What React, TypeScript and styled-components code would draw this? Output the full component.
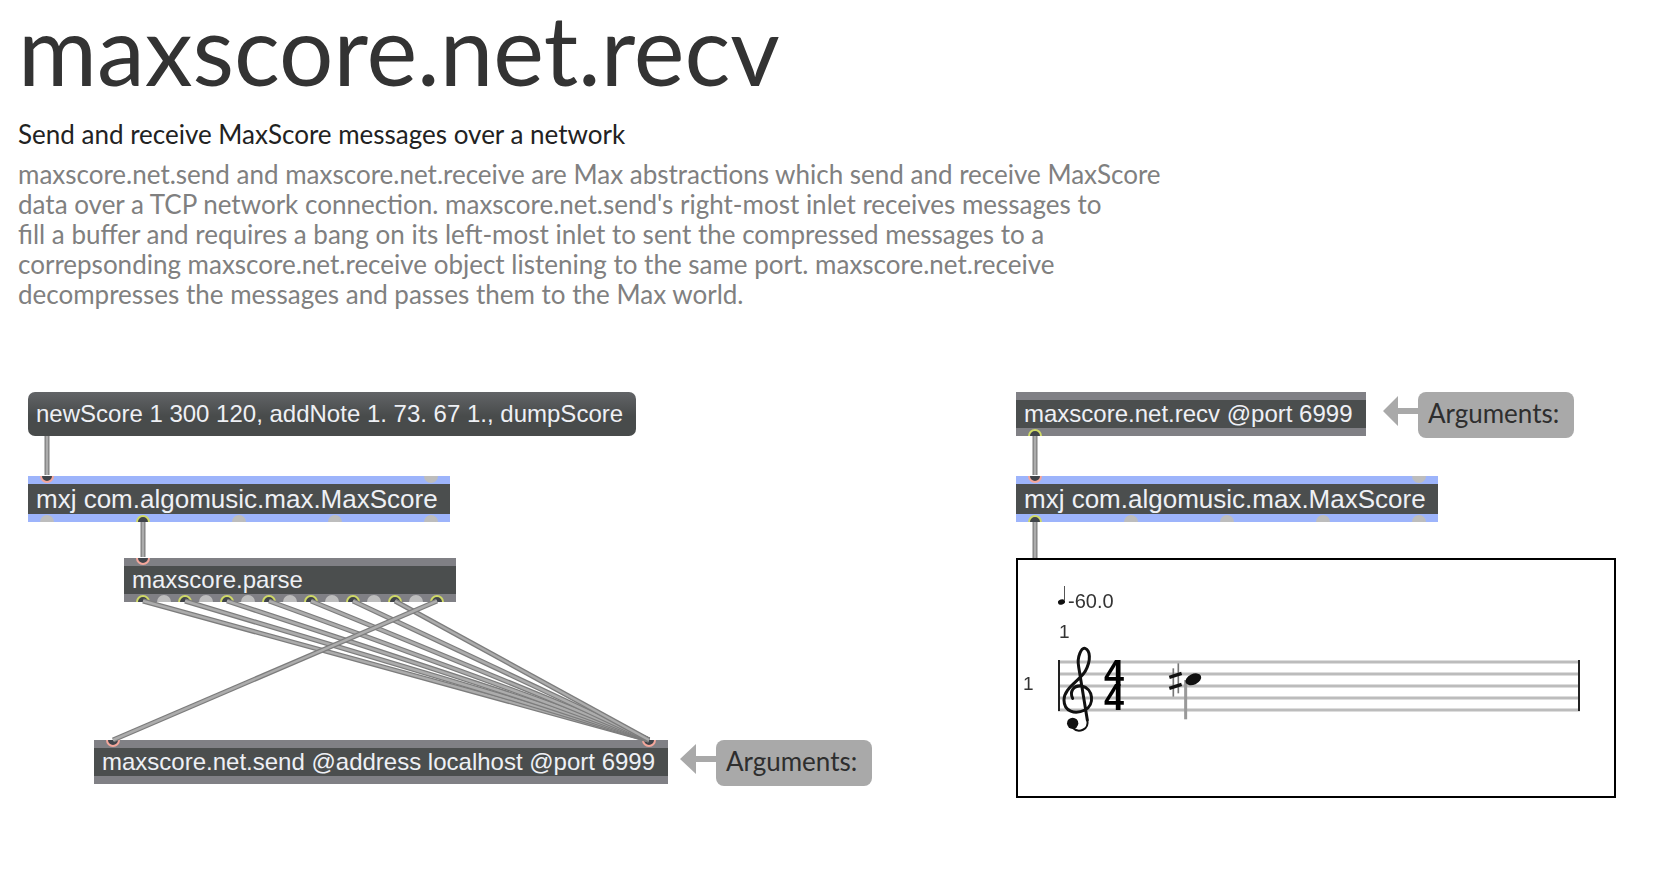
import styled, { createGlobalStyle } from "styled-components";

const GlobalStyle = createGlobalStyle`
  html, body {
    margin: 0;
    padding: 0;
    background: #fff;
    overflow: hidden;
  }
`;

const Page = styled.div`
  width: 1654px;
  height: 876px;
  display: flex;
  flex-direction: column;
  font-family: Lato, "Open Sans", sans-serif;
`;

const Header = styled.header`
  height: 340px;
  padding-left: 18px;
  display: flex;
  flex-direction: column;
  flex-shrink: 0;
`;

const Title = styled.h1`
  margin: 0;
  font-size: 96px;
  line-height: 98px;
  font-weight: 400;
  color: #333;
  white-space: nowrap;
`;

const Subtitle = styled.h2`
  margin: 20px 0 0;
  font-size: 26px;
  line-height: 32px;
  font-weight: 400;
  color: #222;
  white-space: nowrap;
`;

const Description = styled.p`
  margin: 9px 0 0;
  font-size: 26px;
  line-height: 30px;
  color: #808080;
  white-space: nowrap;
`;

// free patcher canvas, objects sit at their patch coordinates (top of canvas = y 340)
const Canvas = styled.div`
  position: relative;
  flex: 1;
`;

type BoxKind = "message" | "object" | "selected";

const Box = styled.div<{ $kind: BoxKind; $x: number; $y: number; $w: number }>`
  position: absolute;
  left: ${(p) => p.$x}px;
  top: ${(p) => p.$y}px;
  width: ${(p) => p.$w}px;
  box-sizing: border-box;
  overflow: hidden;
  padding: ${(p) => (p.$kind === "message" ? "0" : "8px 0")};
  border-radius: ${(p) => (p.$kind === "message" ? "7px" : "0")};
  background: ${(p) =>
    p.$kind === "message"
      ? "linear-gradient(#626467, #484b4b 55%)"
      : p.$kind === "selected"
        ? "#9db4fb"
        : "#808085"};
`;

const BoxLabel = styled.div<{ $tall?: boolean }>`
  height: ${(p) => (p.$tall ? 30 : 28)}px;
  line-height: ${(p) => (p.$tall ? 30 : 28)}px;
  padding-left: 8px;
  background: #4b4e4e;
  color: #eef0f5;
  font-family: "Liberation Sans", Arial, sans-serif;
  font-size: ${(p) => (p.$tall ? 26 : 24)}px;
  white-space: nowrap;
`;

const MessageLabel = styled(BoxLabel)`
  height: 44px;
  line-height: 43px;
  background: transparent;
`;

// inlets hang on the top edge of a box, outlets on the bottom edge
const PortRow = styled.div<{ $bottom?: boolean; $gap?: number }>`
  position: absolute;
  left: 12px;
  ${(p) => (p.$bottom ? "bottom: -7px;" : "top: -7px;")}
  display: flex;
  gap: ${(p) => p.$gap ?? 0}px;
`;

type PortKind = "idle" | "inlet" | "outlet";

const Port = styled.span<{ $kind: PortKind }>`
  width: 14px;
  height: 14px;
  box-sizing: border-box;
  border-radius: 50%;
  border: 2px solid
    ${(p) =>
      p.$kind === "inlet" ? "#f4a79c" : p.$kind === "outlet" ? "#cfd966" : "#bdbdbd"};
  background: ${(p) => (p.$kind === "idle" ? "#bdbdbd" : "#40444a")};
`;

const Comment = styled.div<{ $x: number; $y: number }>`
  position: absolute;
  left: ${(p) => p.$x}px;
  top: ${(p) => p.$y}px;
  width: 156px;
  height: 46px;
  line-height: 42px;
  padding-left: 10px;
  box-sizing: border-box;
  border-radius: 8px;
  background: #a9a9a9;
  color: #2e2e2e;
  font-size: 26px;
  white-space: nowrap;
`;

const Overlay = styled.svg`
  position: absolute;
  left: 0;
  top: 0;
  pointer-events: none;
`;

const ScorePanel = styled.div`
  position: absolute;
  left: 1016px;
  top: 218px;
  width: 600px;
  height: 240px;
  box-sizing: border-box;
  border: 2px solid #000;
  background: #fff;
`;

const ScoreDrawing = styled.svg`
  display: block;
  filter: blur(0.45px);
`;

const ScoreText = styled.text<{ $size: number }>`
  font-family: "Liberation Sans", Arial, sans-serif;
  font-size: ${(p) => p.$size}px;
  fill: #333;
`;

const TimeDigit = styled.text`
  font-family: "Liberation Sans", Arial, sans-serif;
  font-weight: 700;
  font-size: 36px;
  fill: #000;
`;

// cords in canvas coordinates
const cords: [number, number, number, number][] = [
  [47, 96, 47, 135],
  [143, 182, 143, 217],
  [143, 261, 649, 400],
  [185, 261, 649, 400],
  [227, 261, 649, 400],
  [269, 261, 649, 400],
  [311, 261, 649, 400],
  [353, 261, 649, 400],
  [395, 261, 649, 400],
  [437, 261, 113, 400],
  [1035, 96, 1035, 135],
  [1035, 182, 1035, 218],
];

const mxjOutlets = [0, 1, 2, 3, 4];
const parseOutlets = Array.from({ length: 15 }, (_, i) => i);
const staffLines = [662, 674, 686, 698, 710];

function ScoreView() {
  return (
    <ScorePanel>
      <ScoreDrawing width={596} height={236} viewBox="1018 560 596 236">
        {staffLines.map((y) => (
          <line key={y} x1={1058} x2={1580} y1={y} y2={y} stroke="#bcbcbc" strokeWidth={3} />
        ))}
        <line x1={1059} x2={1059} y1={660} y2={711} stroke="#222" strokeWidth={2} />
        <line x1={1579} x2={1579} y1={660} y2={711} stroke="#222" strokeWidth={2} />

        {/* tempo */}
        <ellipse cx={1061.5} cy={602} rx={3.6} ry={2.6} fill="#111" transform="rotate(-20 1061.5 602)" />
        <line x1={1064.5} x2={1064.5} y1={586} y2={601} stroke="#555" strokeWidth={1} />
        <ScoreText x={1068} y={608} $size={20}>-60.0</ScoreText>
        <ScoreText x={1059} y={638} $size={19}>1</ScoreText>
        <ScoreText x={1023} y={690} $size={19}>1</ScoreText>

        {/* treble clef, sketched at 3x */}
        <g transform="translate(1010 560) scale(0.3333)" fill="none" stroke="#111" strokeLinecap="round">
          <path
            d="M232 480 L206 320 C200 290 215 262 225 265 C240 270 245 300 225 335 C205 365 162 385 162 420 C162 455 195 464 225 450 C255 435 250 385 215 378 C190 375 178 395 188 415"
            strokeWidth={9}
          />
          <path d="M232 480 C238 510 205 520 190 505" strokeWidth={6} />
          <circle cx={188} cy={490} r={17} fill="#111" stroke="none" />
        </g>

        <TimeDigit x={1104} y={686}>4</TimeDigit>
        <TimeDigit x={1104} y={710}>4</TimeDigit>

        {/* sharp and note */}
        <g transform="translate(1010 560) scale(0.3333)">
          <line x1={490} x2={490} y1={325} y2={410} stroke="#777" strokeWidth={5} />
          <line x1={505} x2={505} y1={310} y2={400} stroke="#777" strokeWidth={5} />
          <line x1={478} x2={515} y1={352} y2={340} stroke="#111" strokeWidth={10} />
          <line x1={478} x2={515} y1={385} y2={373} stroke="#111" strokeWidth={10} />
          <line x1={527} x2={527} y1={360} y2={478} stroke="#999" strokeWidth={9} />
          <ellipse cx={550} cy={358} rx={25} ry={16} fill="#111" transform="rotate(-25 550 358)" />
        </g>
      </ScoreDrawing>
    </ScorePanel>
  );
}

export default function App() {
  return (
    <Page>
      <GlobalStyle />
      <Header>
        <Title>maxscore.net.recv</Title>
        <Subtitle>Send and receive MaxScore messages over a network</Subtitle>
        <Description>
          maxscore.net.send and maxscore.net.receive are Max abstractions which send and receive MaxScore
          <br />
          data over a TCP network connection. maxscore.net.send's right-most inlet receives messages to
          <br />
          fill a buffer and requires a bang on its left-most inlet to sent the compressed messages to a
          <br />
          correpsonding maxscore.net.receive object listening to the same port. maxscore.net.receive
          <br />
          decompresses the messages and passes them to the Max world.
        </Description>
      </Header>

      <Canvas>
        <Box $kind="message" $x={28} $y={52} $w={608}>
          <MessageLabel>newScore 1 300 120, addNote 1. 73. 67 1., dumpScore</MessageLabel>
        </Box>

        <Box $kind="selected" $x={28} $y={136} $w={422}>
          <BoxLabel $tall>mxj com.algomusic.max.MaxScore</BoxLabel>
          <PortRow $gap={370}>
            <Port $kind="inlet" />
            <Port $kind="idle" />
          </PortRow>
          <PortRow $bottom $gap={82}>
            {mxjOutlets.map((i) => (
              <Port key={i} $kind={i === 1 ? "outlet" : "idle"} />
            ))}
          </PortRow>
        </Box>

        <Box $kind="object" $x={124} $y={218} $w={332}>
          <BoxLabel>maxscore.parse</BoxLabel>
          <PortRow>
            <Port $kind="inlet" />
          </PortRow>
          <PortRow $bottom $gap={7}>
            {parseOutlets.map((i) => (
              <Port key={i} $kind={i % 2 === 0 ? "outlet" : "idle"} />
            ))}
          </PortRow>
        </Box>

        <Box $kind="object" $x={94} $y={400} $w={574}>
          <BoxLabel>maxscore.net.send @address localhost @port 6999</BoxLabel>
          <PortRow $gap={522}>
            <Port $kind="inlet" />
            <Port $kind="inlet" />
          </PortRow>
        </Box>

        <Comment $x={716} $y={400}>Arguments:</Comment>

        <Box $kind="object" $x={1016} $y={52} $w={350}>
          <BoxLabel>maxscore.net.recv @port 6999</BoxLabel>
          <PortRow $bottom>
            <Port $kind="outlet" />
          </PortRow>
        </Box>

        <Comment $x={1418} $y={52}>Arguments:</Comment>

        <Box $kind="selected" $x={1016} $y={136} $w={422}>
          <BoxLabel $tall>mxj com.algomusic.max.MaxScore</BoxLabel>
          <PortRow $gap={370}>
            <Port $kind="inlet" />
            <Port $kind="idle" />
          </PortRow>
          <PortRow $bottom $gap={82}>
            {mxjOutlets.map((i) => (
              <Port key={i} $kind={i === 0 ? "outlet" : "idle"} />
            ))}
          </PortRow>
        </Box>

        <Overlay width={1654} height={536}>
          {cords.map(([x1, y1, x2, y2]) => (
            <g key={`${x1}-${y1}-${x2}-${y2}`}>
              <line x1={x1} y1={y1} x2={x2} y2={y2} stroke="#7d7d7d" strokeWidth={5} />
              <line x1={x1} y1={y1} x2={x2} y2={y2} stroke="#acacac" strokeWidth={2.5} />
            </g>
          ))}
          {/* comment arrows */}
          <path d="M680 419 L696 404 V416 H716 V422 H696 V434 Z" fill="#a9a9a9" />
          <path d="M1383 71 L1398 56 V68 H1418 V74 H1398 V86 Z" fill="#a9a9a9" />
        </Overlay>

        <ScoreView />
      </Canvas>
    </Page>
  );
}
